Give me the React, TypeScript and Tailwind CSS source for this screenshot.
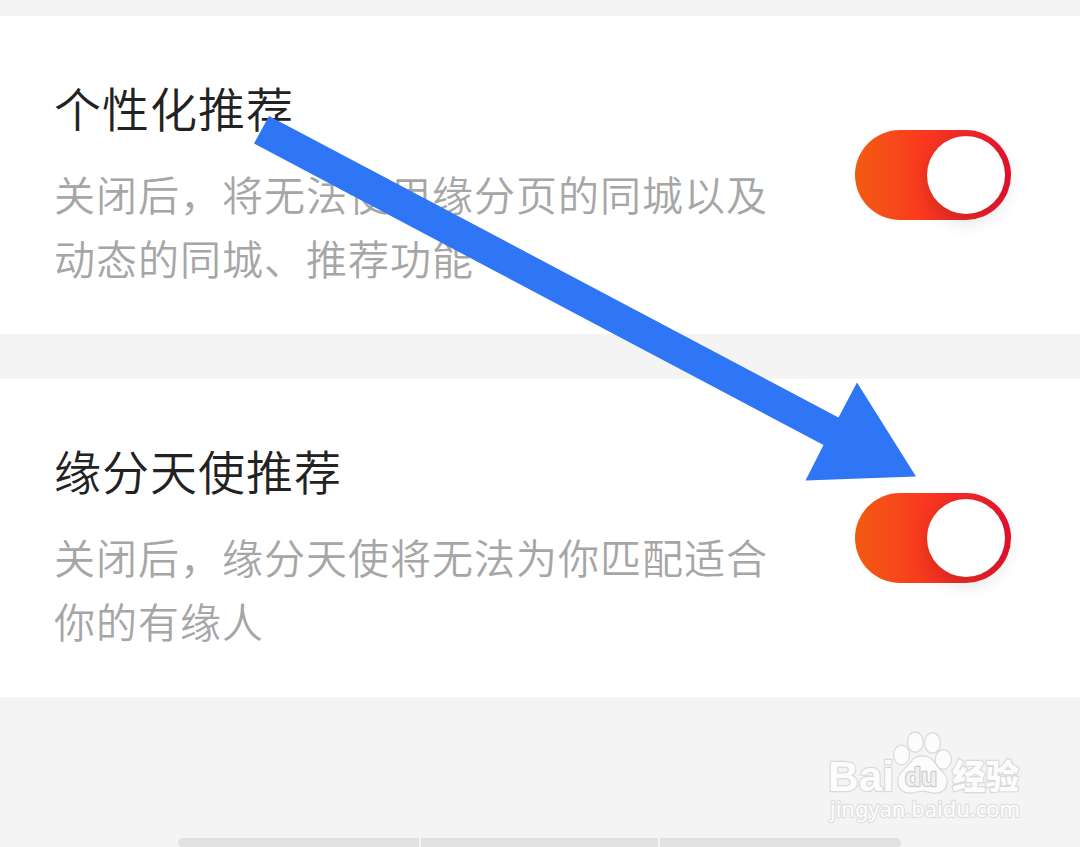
import React, { useState } from 'react';

type Setting = {
  id: string;
  title: string;
  lines: string[];
};

const settings: Setting[] = [
  {
    id: 'personal',
    title: '个性化推荐',
    lines: ['关闭后，将无法使用缘分页的同城以及', '动态的同城、推荐功能'],
  },
  {
    id: 'angel',
    title: '缘分天使推荐',
    lines: ['关闭后，缘分天使将无法为你匹配适合', '你的有缘人'],
  },
];

const Toggle = ({ label }: { label: string }) => {
  const [on, setOn] = useState(true);

  return (
    <button
      role="switch"
      aria-checked={on}
      aria-label={label}
      onClick={() => setOn(!on)}
      className={`flex h-[90px] w-[156px] shrink-0 items-center rounded-full px-[6px] ${
        on ? 'justify-end bg-linear-to-r from-[#f25a10] via-[#fa371f] via-45% to-[#e8102f]' : 'justify-start bg-gray-300'
      }`}
    >
      <span className="size-[78px] rounded-full bg-white shadow-[0_6px_20px_rgba(0,0,0,0.15)]" />
    </button>
  );
};

const SettingRow = ({ setting }: { setting: Setting }) => {
  return (
    <section className="flex h-[318px] items-center justify-between bg-white pr-[69px] pl-[54px]">
      <div className="h-[206px]">
        <h2 className="h-[70px] text-[47px] leading-[70px] font-[350] tracking-[1px] text-[#222222]">{setting.title}</h2>
        <div className="mt-[19px] text-[41px] leading-[64px] font-[350] tracking-[1px] text-[#a6a6a6]">
          {setting.lines.map((line) => (
            <p key={line} className="whitespace-nowrap">{line}</p>
          ))}
        </div>
      </div>
      <Toggle label={setting.title} />
    </section>
  );
};

const Arrow = () => (
  <svg className="pointer-events-none absolute inset-0" width="1080" height="847" viewBox="0 0 1080 847">
    <polygon points="269,116 838.5,417.5 857,382.5 916,476.5 805.5,480.5 823.5,445 254,143.5" fill="#2f76f6" />
  </svg>
);

const Watermark = () => (
  <svg className="absolute top-[720px] left-[810px]" width="230" height="110" viewBox="0 0 230 110">
    <g fill="#fcfcfc" stroke="#dadada" strokeWidth="2.4" strokeLinejoin="round" paintOrder="stroke">
      <text x="18" y="71" fontSize="43" fontWeight="700" fontFamily="Liberation Sans, sans-serif" textLength="66" lengthAdjust="spacingAndGlyphs">Bai</text>
      <ellipse cx="91.5" cy="35" rx="7.4" ry="9.3" />
      <ellipse cx="105.3" cy="22" rx="7.2" ry="9.6" />
      <ellipse cx="122.5" cy="23" rx="7.4" ry="9.6" />
      <ellipse cx="133.3" cy="39.5" rx="7.4" ry="9.3" />
      <path d="M112 36.500C103 36.500 101 44 96 48C91 53 88.500 56 88.500 62C88.500 69 94 72.500 100 72.500C105 72.500 108 70.500 112 70.500C117 70.500 120 72.500 125 72.500C132 72.500 136.500 69 136.500 61C136.500 54 130 51 127 47C123 41 120 36.500 112 36.500Z" />
      <text x="95" y="66" fontSize="26" fontWeight="700" fontFamily="Liberation Sans, sans-serif" strokeWidth="2.400" textLength="32" lengthAdjust="spacingAndGlyphs" stroke="#cccccc" fill="#f0f0f0">du</text>
      <text x="142" y="69" fontSize="34" fontWeight="900" fontFamily="'Noto Sans CJK SC', sans-serif" textLength="67" lengthAdjust="spacingAndGlyphs">经验</text>
      <text x="20" y="97" fontSize="22" fontFamily="'Noto Sans', sans-serif" textLength="190" lengthAdjust="spacingAndGlyphs" stroke="#e0e0e0">jingyan.baidu.com</text>
    </g>
  </svg>
);

const App = () => {
  return (
    <main className="relative flex h-[847px] w-[1080px] flex-col overflow-hidden bg-[#f4f4f4] pt-[16px] font-['Noto_Sans_CJK_SC',sans-serif]">
      <div className="flex flex-col gap-[45px]">
        {settings.map((setting) => (
          <SettingRow key={setting.id} setting={setting} />
        ))}
      </div>

      {/* bottom segment strip, cut off by the screen edge */}
      <div className="mt-auto ml-[178px] flex h-[10px] w-[723px] gap-[2px] overflow-hidden rounded-full -mb-px">
        <div className="w-[241px] bg-[#e1e1e1]" />
        <div className="w-[237px] bg-[#e1e1e1]" />
        <div className="flex-1 bg-[#e1e1e1]" />
      </div>

      <Watermark />
      <Arrow />
    </main>
  );
};

export default App;
